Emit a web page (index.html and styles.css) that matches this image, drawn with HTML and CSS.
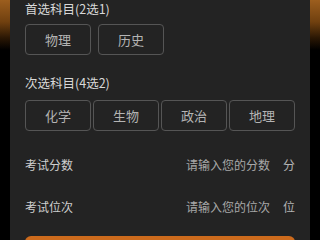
FILE: index.html
```html
<!DOCTYPE html>
<html>
<head>
<meta charset="utf-8">
<link rel="stylesheet" href="styles.css">
<title>选科</title>
</head>
<body>
<div class="panel">
  <div class="title">首选科目(2选1)</div>
  <div class="options first">
    <div class="opt">物理</div>
    <div class="opt">历史</div>
  </div>
  <div class="title second">次选科目(4选2)</div>
  <div class="options four">
    <div class="opt">化学</div>
    <div class="opt">生物</div>
    <div class="opt">政治</div>
    <div class="opt">地理</div>
  </div>
  <div class="field top">
    <span class="label">考试分数</span>
    <span class="input">请输入您的分数</span>
    <span class="unit">分</span>
  </div>
  <div class="field">
    <span class="label">考试位次</span>
    <span class="input">请输入您的位次</span>
    <span class="unit">位</span>
  </div>
  <div class="submit"></div>
</div>
</body>
</html>
```

FILE: styles.css
```css
html, body {
  margin: 0;
  height: 100%;
}
body {
  background: linear-gradient(to bottom, #9c5e1e 0, #70400f 22px, #2a1704 38px, #000 50px) no-repeat;
  background-color: #000;
  font-family: "Noto Sans CJK SC", "Noto Sans", sans-serif;
  font-size: 12px;
  overflow: hidden;
}
.panel {
  margin: 0 10px;
  background-color: #232323;
  padding: 0 15px;
  height: 100%;
}
.title {
  color: #d8d8d8;
  font-size: 12.5px;
  line-height: 18px;
}
.title.second {
  margin-top: 19px;
}
.options {
  display: flex;
  margin-top: 6px;
}
.options.first {
  gap: 7px;
}
.options.four {
  gap: 2px;
  margin-top: 8px;
}
.opt {
  width: 66px;
  height: 31px;
  box-sizing: border-box;
  border: 1px solid #555;
  border-radius: 4px;
  color: #b4b4b4;
  font-size: 13px;
  display: flex;
  align-items: center;
  justify-content: center;
}
.options.four .opt {
  flex: 1;
}
.field {
  display: flex;
  align-items: center;
  height: 42px;
}
.field.top {
  margin-top: 12px;
}
.label {
  color: #cfcfcf;
  flex: 1;
}
.input {
  color: #a8a8a8;
}
.unit {
  color: #b4b4b4;
  margin-left: 13px;
}
.submit {
  margin-top: 9px;
  height: 40px;
  border-radius: 6px;
  background-color: #cc6a1c;
}
```
